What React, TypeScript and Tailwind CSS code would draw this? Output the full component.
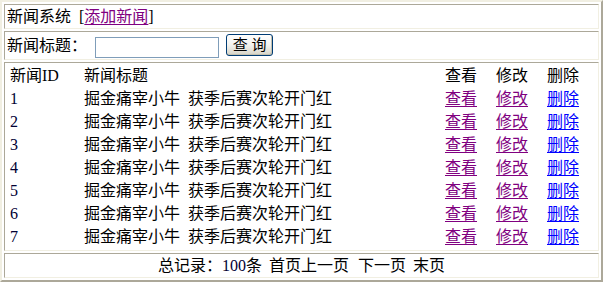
import React from 'react';

const rows = [1, 2, 3, 4, 5, 6, 7];

const cell = 'border border-t-[#aca899] border-l-[#aca899] border-b-[#f1efe2] border-r-[#f1efe2]';

export default function App() {
  return (
    <div
      className="bg-white w-[607px] h-[284px] text-black text-[16px] leading-none"
      style={{ fontFamily: '"Liberation Serif", "Noto Sans CJK SC", serif' }}
    >
      <div className="w-[603px] h-[282px] border-2 border-t-[#f1efe2] border-l-[#f1efe2] border-b-[#aca899] border-r-[#aca899] p-[2px] flex flex-col gap-[2px]">
        {/* header */}
        <div className={`${cell} h-[25px] flex items-center pl-[2px]`}>
          <span>新闻系统</span>
          <span className="ml-[8px]">[</span>
          <a className="text-[#800080] underline underline-offset-2 cursor-pointer">添加新闻</a>
          <span>]</span>
        </div>

        {/* search */}
        <div className={`${cell} h-[29px] flex items-center pl-[2px]`}>
          <span>新闻标题：</span>
          <input
            type="text"
            className="ml-[8px] mt-[4px] w-[124px] h-[21px] border border-[#7f9db9] bg-white outline-none"
          />
          <button className="ml-[7px] mt-[-1px] w-[47px] h-[22px] rounded-[3px] border border-[#003c74] bg-linear-to-b from-white via-[#f3f3ef] to-[#d6d3c6] shadow-[inset_-1px_-1px_0_#c3c0b0] text-[15px] text-black flex items-center justify-center">
            查&nbsp;询
          </button>
        </div>

        {/* list */}
        <div className={`${cell} h-[189px] pt-[1px] pl-[5px]`}>
          <div className="grid grid-cols-[74px_361px_51px_51px_51px]">
            <div className="h-[23px] flex items-center">新闻ID</div>
            <div className="h-[23px] flex items-center">新闻标题</div>
            <div className="h-[23px] flex items-center">查看</div>
            <div className="h-[23px] flex items-center">修改</div>
            <div className="h-[23px] flex items-center">删除</div>
            {rows.map((id) => (
              <React.Fragment key={id}>
                <div className="h-[23px] flex items-center text-[#000033]">{id}</div>
                <div className="h-[23px] flex items-center">
                  <span>掘金痛宰小牛</span>
                  <span className="ml-[8px]">获季后赛次轮开门红</span>
                </div>
                <div className="h-[23px] flex items-center">
                  <a className="text-[#800080] underline underline-offset-2 cursor-pointer">查看</a>
                </div>
                <div className="h-[23px] flex items-center">
                  <a className="text-[#800080] underline underline-offset-2 cursor-pointer">修改</a>
                </div>
                <div className="h-[23px] flex items-center">
                  <a className="text-[#0000ff] underline underline-offset-2 cursor-pointer">删除</a>
                </div>
              </React.Fragment>
            ))}
          </div>
        </div>

        {/* footer */}
        <div className={`${cell} h-[25px] flex items-center justify-center`}>
          <span>总记录：</span>
          <span className="text-[#000033]">100</span>
          <span>条</span>
          <span className="ml-[7px]">首页上一页</span>
          <span className="ml-[9px]">下一页</span>
          <span className="ml-[7px]">末页</span>
        </div>
      </div>
    </div>
  );
}
